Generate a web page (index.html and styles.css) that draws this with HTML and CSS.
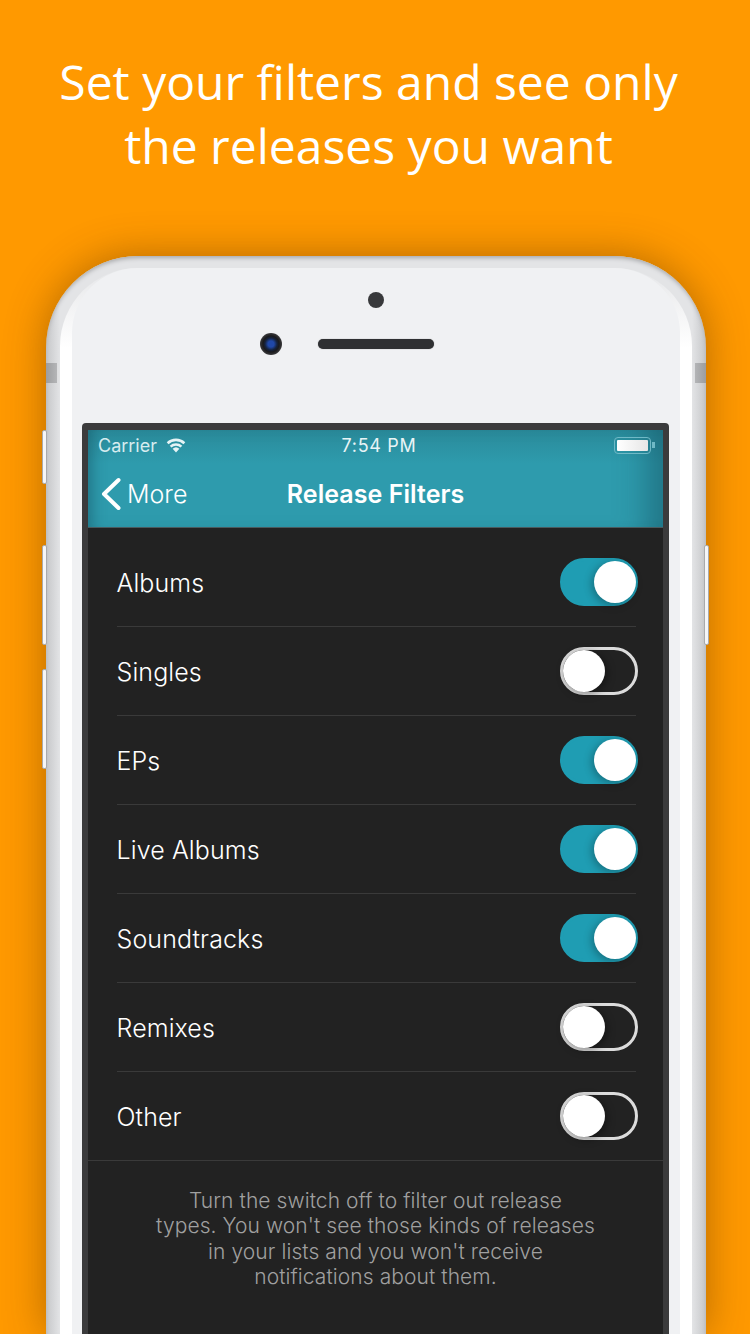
FILE: index.html
```html
<!DOCTYPE html>
<html>
<head>
    <title>Release Filters</title>
    <link rel="stylesheet" href="styles.css">
</head>
<body>
    <h1 class="headline">Set your filters and see only<br>the releases you want</h1>

    <div class="phone">
        <span class="antenna antenna-left"></span>
        <span class="antenna antenna-right"></span>
        <span class="side-btn btn-mute"></span>
        <span class="side-btn btn-up"></span>
        <span class="side-btn btn-down"></span>
        <span class="side-btn btn-power"></span>

        <div class="rim">
            <div class="face">
                <div class="sensors">
                    <span class="front-dot"></span>
                    <div class="speaker"><span class="camera"></span></div>
                </div>

                <div class="bezel">
                    <div class="screen">
                        <header class="topbar">
                            <div class="status">
                                <div class="status-left">
                                    <span>Carrier</span>
                                    <svg class="wifi" width="22" height="16" viewBox="0 0 22 16">
                                        <path d="M11 15.500 7.600 11.800a5 5 0 0 1 6.800 0z" fill="#e6f3f5"/>
                                        <path d="M5.600 9.600a8 8 0 0 1 10.800 0M2.600 6.200a12.400 12.400 0 0 1 16.800 0" fill="none" stroke="#e6f3f5" stroke-width="2.600"/>
                                    </svg>
                                </div>
                                <span class="time">7:54 PM</span>
                                <div class="battery">
                                    <span class="battery-body"><span class="battery-fill"></span></span>
                                    <span class="battery-tip"></span>
                                </div>
                            </div>
                            <div class="navbar">
                                <div class="back">
                                    <svg width="22" height="34" viewBox="0 0 22 34">
                                        <path d="M18.500 3 4 17l14.500 14" fill="none" stroke="#fff" stroke-width="4" stroke-linecap="round" stroke-linejoin="round"/>
                                    </svg>
                                    <span>More</span>
                                </div>
                                <div class="nav-title">Release Filters</div>
                            </div>
                        </header>

                        <div class="filters">
                            <div class="row"><span class="label">Albums</span><span class="toggle on"></span></div>
                            <div class="row"><span class="label">Singles</span><span class="toggle"></span></div>
                            <div class="row"><span class="label">EPs</span><span class="toggle on"></span></div>
                            <div class="row"><span class="label">Live Albums</span><span class="toggle on"></span></div>
                            <div class="row"><span class="label">Soundtracks</span><span class="toggle on"></span></div>
                            <div class="row"><span class="label">Remixes</span><span class="toggle"></span></div>
                            <div class="row last"><span class="label">Other</span><span class="toggle"></span></div>
                        </div>

                        <p class="note">Turn the switch off to filter out release<br>types. You won't see those kinds of releases<br>in your lists and you won't receive<br>notifications about them.</p>
                    </div>
                </div>
            </div>
        </div>
    </div>
</body>
</html>
```

FILE: styles.css
```css
html, body {
    height: 1334px;
    margin: 0;
    overflow: hidden;
}

body {
    background: #ff9900;
    font-family: Inter, "Liberation Sans", sans-serif;
}

.headline {
    margin: 0;
    padding: 50px 13px 78px 0;
    color: #fff;
    font-family: "Open Sans", "Noto Sans", sans-serif;
    font-size: 48px;
    font-weight: 400;
    line-height: 64px;
    text-align: center;
}

.phone {
    position: relative;
    width: 632px;
    height: 1066px;
    margin-left: 46px;
    padding: 12px 14px 0;
    border-radius: 92px 92px 0 0;
    background: linear-gradient(to right, #c6c7c9 0, #e3e4e6 14px, #e3e4e6 646px, #c6c7c9 660px);
    box-shadow: 0 0 40px rgba(90, 50, 0, .45), inset 0 3px 4px -1px #a9aaac;
}

.antenna {
    position: absolute;
    top: 107px;
    width: 11px;
    height: 20px;
}

.antenna-left {
    left: 0;
    background: linear-gradient(to right, #9c9d9f, #b4b5b7);
}

.antenna-right {
    right: 0;
    background: linear-gradient(to left, #9c9d9f, #b4b5b7);
}

.side-btn {
    position: absolute;
    width: 3px;
    border: 1px solid #a9aaac;
    border-radius: 2px;
    background: #f6f6f7;
}

.btn-mute {
    left: -4px;
    top: 174px;
    height: 52px;
}

.btn-up {
    left: -4px;
    top: 289px;
    height: 98px;
}

.btn-down {
    left: -4px;
    top: 413px;
    height: 98px;
}

.btn-power {
    right: -3px;
    top: 289px;
    height: 98px;
}

.rim {
    height: 1066px;
    padding: 0 12px;
    border-radius: 78px 78px 0 0;
    background: linear-gradient(to bottom, #e6e7e9 0, #fff 80px);
}

.face {
    height: 1066px;
    padding: 0 11px 0 10px;
    border-radius: 65px 65px 0 0;
    background: #f0f1f3;
}

.sensors {
    display: flex;
    flex-direction: column;
    align-items: center;
    height: 155px;
    padding-top: 24px;
    box-sizing: border-box;
}

.front-dot {
    width: 16px;
    height: 16px;
    border-radius: 50%;
    background: #38393b;
}

.speaker {
    position: relative;
    width: 116px;
    height: 10px;
    margin-top: 31px;
    border-radius: 5px;
    background: #2f3032;
    box-shadow: 0 0 1px #777;
}

.camera {
    position: absolute;
    left: -58px;
    top: -6px;
    width: 22px;
    height: 22px;
    border-radius: 50%;
    background: radial-gradient(circle, #2048a8 0, #2048a8 3px, #15233f 6px, #1a1a1c 8px, #3a3a3c 11px);
}

.bezel {
    height: 904px;
    padding: 7px 6px 0;
    border-radius: 4px 4px 0 0;
    background: #3b3b3c;
}

.screen {
    height: 904px;
    background: #222;
    color: #fff;
}

.topbar {
    height: 97px;
    border-bottom: 1px solid #4a5a5e;
    background: linear-gradient(to bottom, #2a8a9a 0, #2e9bad 34px);
    box-shadow: inset 14px 0 14px -10px rgba(20, 80, 95, .5), inset -40px 0 30px -24px rgba(20, 80, 95, .5);
}

.status {
    display: grid;
    grid-template-columns: 1fr auto 1fr;
    align-items: center;
    height: 30px;
    padding: 0 8px 2px 10px;
    color: #d7ecef;
    font-size: 18px;
}

.status-left {
    display: flex;
    align-items: center;
    gap: 8px;
}

.time {
    margin-left: 5px;
    color: #e8f4f6;
    font-size: 18px;
    letter-spacing: .7px;
}

.battery {
    display: flex;
    align-items: center;
    justify-content: flex-end;
    gap: 1px;
}

.battery-body {
    display: block;
    width: 31px;
    height: 11px;
    padding: 2px;
    border: 1px solid #6fb9c6;
    border-radius: 4px;
}

.battery-fill {
    display: block;
    height: 11px;
    border-radius: 1px;
    background: linear-gradient(to right, #fff, #e6e6e6);
}

.battery-tip {
    width: 3px;
    height: 6px;
    background: #6fb9c6;
}

.navbar {
    position: relative;
    height: 65px;
    padding-bottom: 2px;
    box-sizing: border-box;
    display: flex;
    align-items: center;
    justify-content: center;
}

.back {
    position: absolute;
    left: 12px;
    top: 15px;
    display: flex;
    align-items: center;
    gap: 5px;
    font-size: 25px;
    font-weight: 300;
}

.nav-title {
    font-size: 25px;
    font-weight: 600;
    letter-spacing: .05px;
}

.filters {
    padding-top: 10px;
}

.row {
    display: flex;
    align-items: center;
    justify-content: space-between;
    height: 88px;
    margin: 0 27px 0 29px;
    border-bottom: 1px solid #3a3a3a;
    font-size: 25px;
    font-weight: 300;
}

.row.last {
    margin: 0;
    padding: 0 25px 0 29px;
}

.label {
    margin-left: -.5px;
    padding-top: 2px;
    letter-spacing: .1px;
}

.toggle {
    position: relative;
    flex: none;
    width: 72px;
    height: 42px;
    margin-right: -2px;
    border: 3px solid #dcdcdc;
    border-radius: 24px;
}

.row.last .toggle {
    margin-right: 0;
}

.toggle::after {
    content: "";
    position: absolute;
    left: 0;
    top: 0;
    width: 42px;
    height: 42px;
    border-radius: 50%;
    background: #fff;
    box-shadow: 2px 2px 8px rgba(0, 0, 0, .4);
}

.toggle.on {
    border-color: #1f9db3;
    background: #1f9db3;
}

.toggle.on::after {
    left: auto;
    right: -1px;
    box-shadow: -2px 2px 8px rgba(0, 0, 0, .3);
}

.note {
    margin: 27px 0 0;
    color: #a0a0a0;
    font-size: 21px;
    font-weight: 300;
    letter-spacing: .08px;
    line-height: 25.4px;
    text-align: center;
}
```
